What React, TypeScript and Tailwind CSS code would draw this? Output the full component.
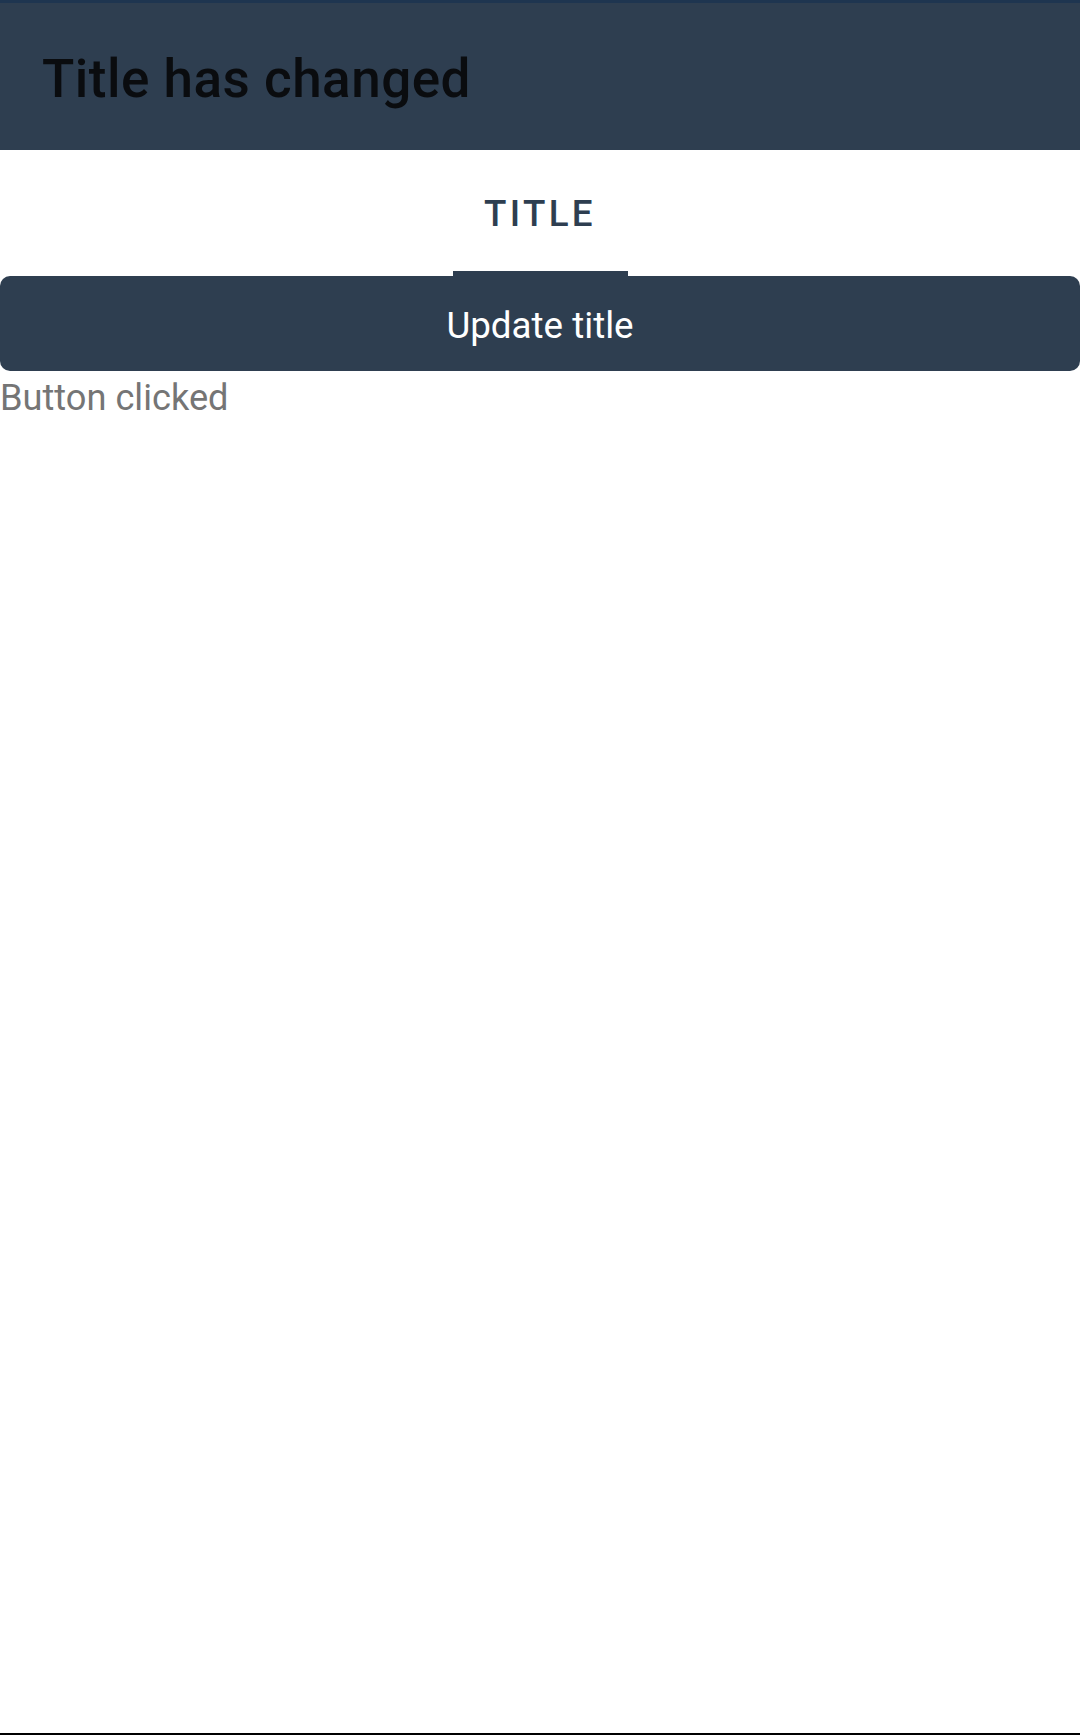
import React from "react";

export default function App() {
  return (
    <div className="w-[1080px] h-[1735px] bg-white flex flex-col font-['Roboto',sans-serif] relative overflow-hidden">
      <div className="h-[3px] bg-[#1e3550]" />
      <div className="h-[147px] bg-[#2e3e50] flex items-center pl-[42px]">
        <span className="text-[53px] font-medium text-[#0a0c0f] leading-none tracking-[0.5px] pt-[6px]">Title has changed</span>
      </div>
      <div className="h-[126px] flex flex-col items-center">
        <div className="flex-1 flex items-center justify-center">
          <span className="text-[36.75px] font-medium text-[#2e3e50] tracking-[3.3px] leading-none pt-[8px]">TITLE</span>
        </div>
        <div className="w-[175px] h-[5px] bg-[#2e3e50]" />
      </div>
      <button className="h-[95px] w-full bg-[#2e3e50] rounded-[10px] text-white text-[36.75px] flex items-center justify-center leading-none">
        <span className="pt-[6px]">Update title</span>
      </button>
      <div className="text-[36.2px] text-[#757575] leading-[43px] mt-[5px]">Button clicked</div>
      <div className="absolute left-0 right-0 bottom-0 h-[2px] bg-black" />
    </div>
  );
}
